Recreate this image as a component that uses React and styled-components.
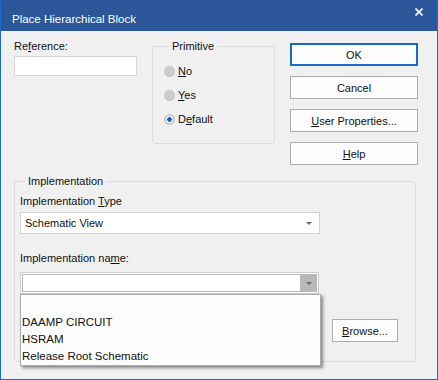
import React from "react"
import styled, { createGlobalStyle } from "styled-components"

const GlobalStyle = createGlobalStyle`
    html, body {
        margin: 0;
        padding: 0;
        background: #ffffff;
    }
    body {
        font-family: "Liberation Sans", Arial, sans-serif;
        font-size: 11px;
        color: #111111;
    }
`

const Window = styled.div`
    box-sizing: border-box;
    width: 438px;
    height: 380px;
    border: 1px solid #1c6bd0;
    border-top-color: #2b579a;
    background: #f0f0f0;
    display: flex;
    flex-direction: column;
`

const TitleBar = styled.div`
    height: 30px;
    flex: none;
    background: #2b579a;
    color: #ffffff;
    display: flex;
    justify-content: space-between;
    align-items: flex-start;
    padding-left: 11px;
`

const Title = styled.div`
    margin-top: 11px;
    line-height: 14px;
    font-size: 11.5px;
`

const CloseButton = styled.div`
    margin: 7px 14px 0 0;
    width: 8px;
    height: 8px;
    display: flex;
`

const Body = styled.div`
    flex: 1;
    padding: 8px 0 0 13px;
`

const TopRow = styled.div`
    display: flex;
    align-items: flex-start;
`

const RefColumn = styled.div`
    width: 123px;
    display: flex;
    flex-direction: column;
    gap: 3px;
`

const Label = styled.div`
    line-height: 14px;
    height: 14px;
    white-space: nowrap;
    margin-top: ${p => p.$top || 0}px;
`

const Key = styled.span`
    text-decoration: underline;
    text-underline-offset: 1px;
`

const TextInput = styled.div`
    box-sizing: border-box;
    height: 20px;
    background: #ffffff;
    border: 1px solid #d7d7d7;
`

const Group = styled.fieldset`
    box-sizing: border-box;
    margin: ${p => p.$margin || 0};
    padding: ${p => p.$padding || 0};
    width: ${p => p.$width}px;
    height: ${p => p.$height}px;
    border: 1px solid #dcdcdc;
    border-radius: 3px;
    min-width: 0;
`

const Legend = styled.legend`
    margin-left: 5px;
    padding: 0 3px;
    line-height: 14px;
`

const RadioList = styled.div`
    display: flex;
    flex-direction: column;
    padding-top: 6px;
`

const RadioRow = styled.div`
    height: 24px;
    display: flex;
    align-items: center;
    gap: 3px;
`

const RadioDot = styled.span`
    box-sizing: border-box;
    width: 11px;
    height: 11px;
    border-radius: 50%;
    border: 1px solid #c2c2c2;
    background: ${p =>
        p.$checked
            ? "radial-gradient(circle, #0a62c4 0 2px, #f4f4f4 2.6px 3.4px, #cccccc 4px)"
            : "#cccccc"};
`

const ButtonColumn = styled.div`
    margin: 4px 0 0 15px;
    display: flex;
    flex-direction: column;
    gap: 10px;
`

const Button = styled.div`
    box-sizing: border-box;
    width: ${p => p.$width || 128}px;
    height: ${p => p.$height || 23}px;
    background: #fdfdfd;
    border: ${p => (p.$default ? "2px solid #1669c9" : "1px solid #adadad")};
    display: flex;
    align-items: center;
    justify-content: center;
    line-height: 14px;
`

const ComboBox = styled.div`
    box-sizing: border-box;
    width: 300px;
    height: 22px;
    margin-top: ${p => p.$top || 0}px;
    background: #ffffff;
    border: 1px solid #d3d3d3;
    display: flex;
    align-items: center;
    justify-content: space-between;
    padding: 0 7px 0 4px;
`

const Arrow = styled.span`
    width: 0;
    height: 0;
    border-left: 3px solid transparent;
    border-right: 3px solid transparent;
    border-top: 3px solid #6b6b6b;
`

const OpenCombo = styled.div`
    position: relative;
    box-sizing: border-box;
    width: 299px;
    height: 22px;
    margin-top: 7px;
    border: 1px solid #cfcfcf;
    background: #ffffff;
    padding: 1px;
    display: flex;
`

const OpenField = styled.div`
    flex: 1;
    border: 1px solid #b9b9b9;
    border-right: none;
    background: #ffffff;
`

const OpenArrowBox = styled.div`
    width: 17px;
    background: #b8b8b8;
    display: flex;
    align-items: center;
    justify-content: center;
`

const DropList = styled.ul`
    position: absolute;
    top: 21px;
    left: -1px;
    z-index: 2;
    box-sizing: border-box;
    width: 301px;
    margin: 0;
    padding: 2px 0 0;
    list-style: none;
    background: #fdfdfd;
    border: 1px solid #adadad;
    box-shadow: 2px 2px 3px rgba(0, 0, 0, 0.45);
`

const DropItem = styled.li`
    height: 17px;
    line-height: 17px;
    padding-left: 1px;
    white-space: nowrap;
    font-size: 11.5px;
`

const BrowseRow = styled.div`
    display: flex;
    justify-content: flex-end;
    margin-top: 25px;
`

const items = ["", "DAAMP CIRCUIT", "HSRAM", "Release Root Schematic"]

export default function App() {
    return (
        <>
            <GlobalStyle />
            <Window>
                <TitleBar>
                    <Title>Place Hierarchical Block</Title>
                    <CloseButton>
                        <svg width="8" height="8" viewBox="0 0 8 8">
                            <path d="M0.5 0.5 L7.5 7.5 M7.5 0.5 L0.5 7.5" stroke="#ffffff" strokeWidth="1.6" />
                        </svg>
                    </CloseButton>
                </TitleBar>
                <Body>
                    <TopRow>
                        <RefColumn>
                            <Label>Re<Key>f</Key>erence:</Label>
                            <TextInput />
                        </RefColumn>
                        <Group $width={123} $height={105} $margin="0 0 0 15px" $padding="0 0 0 11px">
                            <Legend>Primitive</Legend>
                            <RadioList>
                                <RadioRow><RadioDot /><span><Key>N</Key>o</span></RadioRow>
                                <RadioRow><RadioDot /><span><Key>Y</Key>es</span></RadioRow>
                                <RadioRow><RadioDot $checked /><span>D<Key>e</Key>fault</span></RadioRow>
                            </RadioList>
                        </Group>
                        <ButtonColumn>
                            <Button $default>OK</Button>
                            <Button>Cancel</Button>
                            <Button><span><Key>U</Key>ser Properties...</span></Button>
                            <Button><span><Key>H</Key>elp</span></Button>
                        </ButtonColumn>
                    </TopRow>
                    <Group $width={402} $height={188} $margin="9px 0 0 0" $padding="0 17px 0 5px">
                        <Legend>Implementation</Legend>
                        <Label $top={6}>Implementation <Key>T</Key>ype</Label>
                        <ComboBox $top={4}>
                            <span>Schematic View</span>
                            <Arrow />
                        </ComboBox>
                        <Label $top={17}>Implementation na<Key>m</Key>e:</Label>
                        <OpenCombo>
                            <OpenField />
                            <OpenArrowBox><Arrow /></OpenArrowBox>
                            <DropList>
                                {items.map((item, i) => (
                                    <DropItem key={i}>{item}</DropItem>
                                ))}
                            </DropList>
                        </OpenCombo>
                        <BrowseRow>
                            <Button $width={66} $height={23}><span><Key>B</Key>rowse...</span></Button>
                        </BrowseRow>
                    </Group>
                </Body>
            </Window>
        </>
    )
}
